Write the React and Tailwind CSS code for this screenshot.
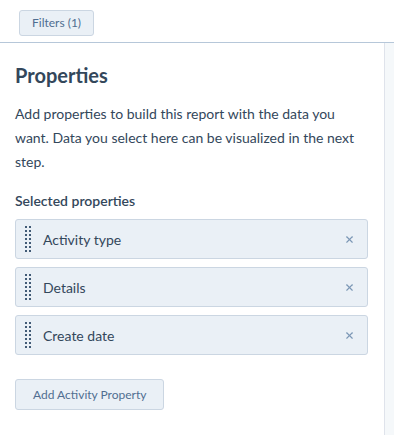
import { X } from 'lucide-react';

const PROPERTIES = ['Activity type', 'Details', 'Create date'];

function Grip() {
  return (
    <div className="grid grid-cols-2 gap-x-[2px] gap-y-[2px]">
      {Array.from({ length: 14 }).map((_, i) => (
        <span key={i} className="block h-[2px] w-[2px] bg-[#425b76]" />
      ))}
    </div>
  );
}

export default function App() {
  return (
    <div className="h-[435px] w-[394px] overflow-hidden bg-white font-['Lato',sans-serif] text-[#33475b]">
      <div className="h-[43px] border-b border-[#b6c7d9] pl-[19px] pt-[9px]">
        <button className="h-[26px] rounded-[3px] border border-[#cbd6e2] bg-[#eaf0f6] px-[12px] text-[12px] text-[#506e91]">
          Filters (1)
        </button>
      </div>
      <div className="flex h-[392px]">
        <div className="w-[384px] px-[15px] pt-[19px]">
          <h2 className="text-[20px] font-bold leading-[26px]">Properties</h2>
          <p className="mt-[14px] text-[14px] leading-[24px]">
            Add properties to build this report with the data you want. Data you select here can be visualized in the next
            step.
          </p>
          <div className="mt-[17px] text-[14px] font-semibold leading-[20px]">Selected properties</div>
          <div className="mt-[8px] flex w-[353px] flex-col gap-[8px]">
            {PROPERTIES.map((p) => (
              <div
                key={p}
                className="flex h-[40px] items-center rounded-[3px] border border-[#cbd6e2] bg-[#eaf0f6] pl-[9px] pr-[12px]"
              >
                <Grip />
                <span className="ml-[12px] flex-1 text-[14px]">{p}</span>
                <X size={11} strokeWidth={2.5} className="text-[#7c98b6]" />
              </div>
            ))}
          </div>
          <button className="mt-[24px] h-[31px] rounded-[3px] border border-[#cbd6e2] bg-[#eaf0f6] px-[17px] text-[12px] text-[#506e91]">
            Add Activity Property
          </button>
        </div>
        <div className="flex-1 border-l border-[#dfe3eb] bg-[#f5f8fa]" />
      </div>
    </div>
  );
}
